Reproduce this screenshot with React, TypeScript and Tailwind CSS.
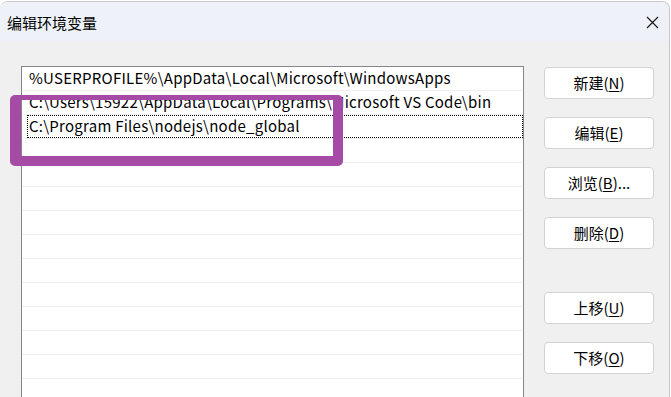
import React from 'react';

const font = { fontFamily: '"Noto Sans CJK SC", "Noto Sans", sans-serif' };

const paths = [
  '%USERPROFILE%\\AppData\\Local\\Microsoft\\WindowsApps',
  'C:\\Users\\15922\\AppData\\Local\\Programs\\Microsoft VS Code\\bin',
  'C:\\Program Files\\nodejs\\node_global',
];

function Btn({ label, hotkey, tail = '' }: { label: string; hotkey: string; tail?: string }) {
  return (
    <button className="w-[110px] h-[32px] bg-white border border-[#d3d3d3] rounded-[4px] text-[15px] text-black flex items-center justify-center">
      {label}(<span className="underline underline-offset-2">{hotkey}</span>){tail}
    </button>
  );
}

export default function App() {
  const rows = Array.from({ length: 14 }, (_, i) => paths[i] ?? '');

  return (
    <div className="w-[671px] h-[397px] overflow-hidden bg-white relative" style={font}>
      <div className="mt-[1px] w-[670px] h-[396px] rounded-t-[8px] border-t border-r border-[#c8c8c8] overflow-hidden flex flex-col">
        {/* title bar */}
        <div className="h-[39px] bg-[#eef2f8] flex items-center justify-between pl-[7px] pr-[10px] shrink-0">
          <span className="text-[15px] text-black leading-none pt-[2px]">编辑环境变量</span>
          <svg width="13" height="13" viewBox="0 0 13 13" className="mt-[2px]">
            <path d="M1 1 L12 12 M12 1 L1 12" stroke="#1a1a1a" strokeWidth="1.2" />
          </svg>
        </div>

        {/* body */}
        <div className="flex-1 bg-[#f0f0f0] flex pl-[21px] pt-[25px]">
          <div className="w-[503px] h-[400px] bg-white border border-[#868686] flex flex-col">
            {rows.map((p, i) => (
              <div key={i} className="h-[24px] shrink-0 border-b border-[#efefef] flex items-center">
                {i === 2 ? (
                  <div className="ml-[5px] h-[23px] flex-1 border border-dotted border-black flex items-center pl-[1px] text-[15px] tracking-[0.25px] text-black whitespace-nowrap">
                    {p}
                  </div>
                ) : (
                  <span className="pl-[7px] text-[15px] tracking-[0.25px] text-black whitespace-nowrap">{p}</span>
                )}
              </div>
            ))}
          </div>

          <div className="ml-[20px] pt-[1px] flex flex-col">
            <div className="flex flex-col gap-[18px]">
              <Btn label="新建" hotkey="N" />
              <Btn label="编辑" hotkey="E" />
              <Btn label="浏览" hotkey="B" tail="..." />
              <Btn label="删除" hotkey="D" />
            </div>
            <div className="mt-[43px] flex flex-col gap-[18px]">
              <Btn label="上移" hotkey="U" />
              <Btn label="下移" hotkey="O" />
            </div>
          </div>
        </div>
      </div>

      {/* highlight annotation */}
      <div className="absolute left-[10px] top-[95px] w-[333px] h-[71px] border-l-[11px] border-r-[10px] border-t-[5px] border-b-[10px] border-[#a54ba5] rounded-[5px]" />
    </div>
  );
}
